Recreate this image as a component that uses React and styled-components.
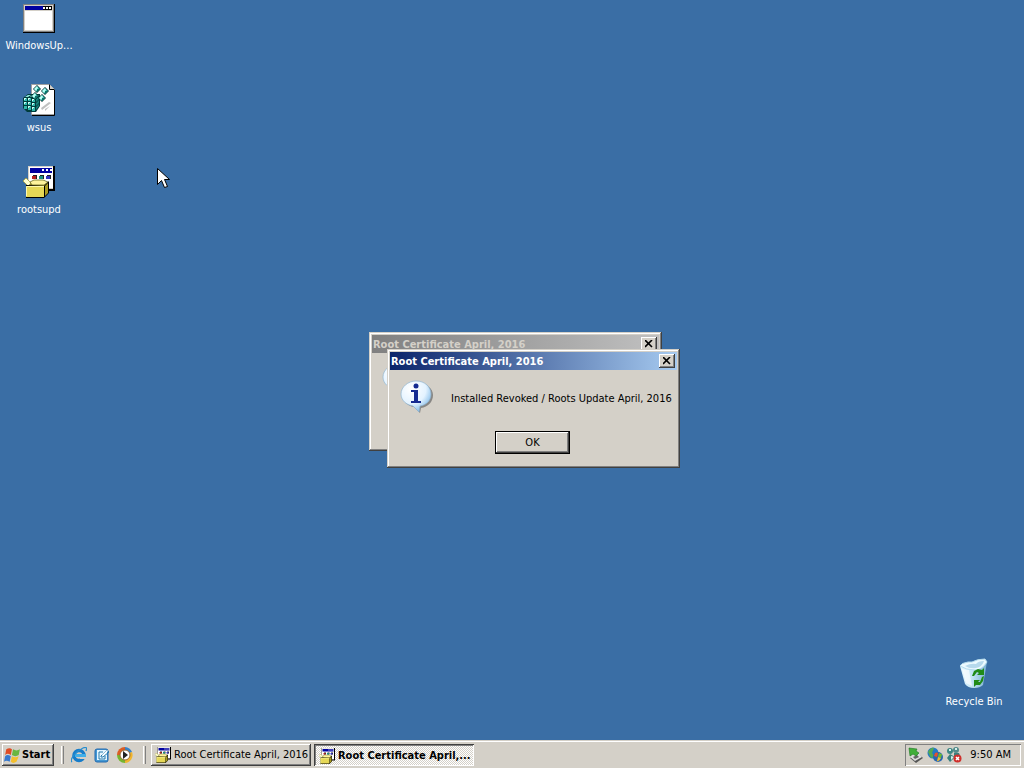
import React from "react";
import styled, { createGlobalStyle, css } from "styled-components";

const face = "#d4d0c8";
const uiFont = '"DejaVu Sans Condensed", "Noto Sans", "Liberation Sans", sans-serif';

const GlobalStyle = createGlobalStyle`
  * { box-sizing: border-box; }
  body { margin: 0; background: #3a6ea5; font: 11px/14px ${uiFont}; color: #000; cursor: default; }
  button { font: inherit; color: inherit; padding: 0; margin: 0; border: 0; border-radius: 0; }
  svg { display: block; flex: none; }
`;

const raised = css`
  background: ${face};
  box-shadow: inset -1px -1px #404040, inset 1px 1px #fff, inset -2px -2px #808080;
`;

const Screen = styled.div`
  display: flex;
  flex-direction: column;
  min-height: 100vh;
`;

const Desktop = styled.main`
  position: relative;
  flex: 1;
  display: flex;
  justify-content: space-between;
  overflow: hidden;
`;

const IconColumn = styled.div`
  display: flex;
  flex-direction: column;
  justify-content: ${(p) => (p.$bottom ? "flex-end" : "flex-start")};
  padding: ${(p) => (p.$bottom ? "0 11px 0 0" : "2px 0 0")};
`;

const Shortcut = styled.button`
  display: flex;
  flex-direction: column;
  align-items: center;
  gap: 5px;
  width: 78px;
  height: 82px;
  background: none;
  color: #fff;
`;

const Window = styled.section`
  position: absolute;
  left: ${(p) => p.$x}px;
  top: ${(p) => p.$y}px;
  width: 293px;
  height: 119px;
  padding: 3px;
  background: ${face};
  box-shadow: inset -1px -1px #404040, inset 1px 1px ${face}, inset -2px -2px #808080, inset 2px 2px #fff;
`;

const TitleBar = styled.header`
  display: flex;
  align-items: center;
  justify-content: space-between;
  height: 18px;
  padding: 0 2px 0 1px;
  color: ${(p) => (p.$active ? "#fff" : face)};
  background: ${(p) => (p.$active ? "linear-gradient(90deg, #0a246a, #a6caf0)" : "linear-gradient(90deg, #808080, #c0c0c0)")};
`;

const Title = styled.h1`
  margin: 0;
  padding-top: 2px;
  font-size: 11px;
  line-height: 14px;
  font-weight: bold;
  white-space: nowrap;
`;

const CloseButton = styled.button`
  display: flex;
  align-items: center;
  justify-content: center;
  width: 16px;
  height: 14px;
  ${raised}
`;

const Message = styled.div`
  display: flex;
  align-items: center;
  gap: 17px;
  padding: 10px 0 0 10px;
  white-space: nowrap;

  p { margin: 0; padding-top: 4px; }
`;

const Actions = styled.footer`
  display: flex;
  justify-content: center;
  padding: 17px 2px 0 0;
`;

const OkButton = styled.button`
  width: 75px;
  height: 23px;
  background: ${face};
  box-shadow: inset 0 0 0 1px #000, inset -2px -2px #404040, inset 2px 2px #fff, inset -3px -3px #808080;
`;

const Pointer = styled.div`
  position: absolute;
  left: 157px;
  top: 168px;
`;

const Taskbar = styled.nav`
  display: flex;
  align-items: center;
  height: 28px;
  padding: 4px 3px 2px 2px;
  background: ${face};
  box-shadow: inset 0 1px ${face}, inset 0 2px #fff;
`;

const StartButton = styled.button`
  display: flex;
  align-items: center;
  gap: 1px;
  width: 52px;
  height: 22px;
  padding-left: 2px;
  font-weight: bold;
  ${raised}
`;

const Grip = styled.span`
  width: 3px;
  height: 18px;
  margin: 0 5px 0 7px;
  background: ${face};
  border-left: 1px solid #fff;
  border-right: 1px solid #808080;
`;

const QuickLaunch = styled.div`
  display: flex;
  gap: 7px;
  padding: 0 3px 0 2px;
`;

const QuickButton = styled.button`
  background: none;
`;

const Tasks = styled.div`
  display: flex;
  flex: 1;
  gap: 3px;
`;

const Task = styled.button`
  display: flex;
  align-items: center;
  gap: 3px;
  width: 160px;
  height: 22px;
  padding-left: 4px;
  white-space: nowrap;
  ${raised}
  ${(p) =>
    p.$active &&
    css`
      padding: 1px 0 0 5px;
      font-weight: bold;
      background: repeating-conic-gradient(#fff 0 25%, ${face} 0 50%) 0 0 / 2px 2px;
      box-shadow: inset 1px 1px #404040, inset -1px -1px #fff, inset 2px 2px #808080;
    `}
`;

const Tray = styled.div`
  display: flex;
  align-items: center;
  gap: 3px;
  height: 22px;
  padding: 0 10px 0 3px;
  box-shadow: inset 1px 1px #808080, inset -1px -1px #fff;

  time { padding-left: 5px; }
`;

const AppWindowIcon = () => (
  <svg width="32" height="32" viewBox="0 0 32 32" shapeRendering="crispEdges" aria-hidden="true">
    <path fill="#000" d="M0 2h32v29H0z" />
    <path fill="#808080" d="M0 2h31v28H0z" />
    <path fill="#d4d0c8" d="M1 3h29v26H1z" />
    <path fill="#fff" d="M2 9h27v19H2z" />
    <path fill="#0000a0" d="M2 4h27v4H2z" />
    <path fill="#000" d="M20 4h9v4h-9z" />
    <path fill="#fff" d="M20 5h2v2h-2zM23 5h2v2h-2zM26 5h2v2h-2z" />
  </svg>
);

const Cube = ({ x, y }) => (
  <g transform={`translate(${x} ${y})`}>
    <path fill="#002c2c" d="m4 0 4 4-4 4-4-4z" />
    <path fill="#30b5a8" d="m4 1 3 3-3 3-3-3z" />
    <path fill="#b8fff5" d="m4 1 1 2-2 3-2-2z" />
    <path fill="#0d7068" d="M4 4h3L4 7z" />
  </g>
);

const RegistryIcon = () => (
  <svg width="32" height="32" viewBox="0 0 32 32" aria-hidden="true">
    <path fill="#fff" stroke="#a0a0a0" d="M8.500.5h18l5 5v25h-23z" />
    <path fill="#d4d0c8" stroke="#000" d="M26.500.5v5h5" />
    <path fill="none" stroke="#000" d="M31.500 6v25.500H9" />
    <path fill="#c0c0c0" d="m18 24 8-6 2 1-9 7zM22 25l5-3-5 5z" />
    <path fill="#003c3c" d="m0 14 5-4h12v12l-4 6H4l-4-4z" />
    <path fill="#8ce9dc" d="m2 13 3-2h3l-3 2zm5 0 2-2h3l-2 2zm5 0 2-2h2l-2 2z" />
    <path fill="#2fb6a9" d="M1 14h3v3H1zm4 0h3v3H5zm4 1h3v3H9zM1 18h3v3H1zm4 0h3v3H5zm4 1h3v3H9zM1 22h3v3H1zm4 0h3v4H5zm4 1h3v4H9z" />
    <path fill="#c9fff5" d="M1 14h2v1H2v1H1zm4 0h2v1H6v1H5zm4 1h2v1h-1v1H9zm-8 3h2v1H2v1H1zm4 0h2v1H6v1H5zm4 1h2v1h-1v1H9zm-4 3h2v1H6v1H5zm4 1h2v1h-1v1H9z" />
    <path fill="#138078" d="m13 15 3-3v3l-3 3zm0 4 3-3v3l-3 3zm0 4 3-3v2l-3 4z" />
    <Cube x={10} y={1} />
    <Cube x={18} y={3} />
    <Cube x={8} y={8} />
    <Cube x={15} y={10} />
  </svg>
);

const PackageIcon = ({ size = 32 }) => (
  <svg width={size} height={size} viewBox="0 0 32 32" aria-hidden="true">
    <path fill="#000" d="M5 0h27v25H5z" />
    <path fill="#d4d0c8" d="M5 0h25v23H5z" />
    <path fill="#fff" d="M6 1h24v21H6z" />
    <path fill="#0000a0" d="M7 2h22v5H7z" />
    <path fill="#fff" d="M19 3h2v2h-2zm4 0h2v2h-2zm4 0h2v2h-2z" />
    <path fill="#222" d="M10 9h4v4h-4zm7 0h4v4h-4zm7 0h4v4h-4z" />
    <path fill="#b82020" d="M9 10h4v3H9z" />
    <path fill="#169080" d="M16 10h4v3h-4z" />
    <path fill="#3333bd" d="M23 10h4v3h-4z" />
    <path fill="#8c8023" d="m4 20 4-4h17l-4 5z" />
    <path fill="#ffffcf" stroke="#a49b38" strokeWidth=".8" d="m0 15 3-3 5 5-3 3z" />
    <path fill="#fff39b" stroke="#6b6a22" strokeWidth=".8" d="m7 16 4-2h9l5 2-4 3H9z" />
    <path fill="#000" d="m3 19 18 1 5-5v12l-5 5H3z" />
    <path fill="#e6d856" d="M3 20h18v11H3z" />
    <path fill="#aa9b20" d="m22 20 3-3v10l-3 3z" />
    <path fill="none" stroke="#fff9ad" d="M3.500 30V20.500H21" />
  </svg>
);

const BinIcon = () => (
  <svg width="32" height="32" viewBox="0 0 32 32" aria-hidden="true">
    <defs>
      <linearGradient id="bin" x2="1">
        <stop stopColor="#e7f8ff" />
        <stop offset=".45" stopColor="#c3e5f5" />
        <stop offset="1" stopColor="#76add0" />
      </linearGradient>
    </defs>
    <path fill="url(#bin)" d="m2 8 5 18q3 4 9 4t9-3l4-23-9 6z" />
    <path fill="#edfaff" stroke="#b6dced" d="M2 8q1-3 8-4h4q5-3 13-3l2 3q-5 8-12 8Q8 12 2 8z" />
    <path fill="#b6d9ec" d="M7 8q6-3 11-2 2-3 8-3-2 6-8 7-6 1-11-2z" />
    <path fill="#fff" opacity=".65" d="m4 11 4 14 6 3-3-16z" />
    <g fill="#208b18">
      <path d="m14 18 2-5 4-2 4 1 2-2v7h-7l2-2-2-1-3 4z" />
      <path d="m26 18-1 5-3 4h-4l-2 2v-7h6l-2 2h2l2-5z" />
    </g>
  </svg>
);

const InfoIcon = () => (
  <svg width="34" height="34" viewBox="0 0 34 34" aria-hidden="true">
    <defs>
      <radialGradient id="bubble" cx=".35" cy=".25" r=".8">
        <stop stopColor="#fff" />
        <stop offset=".6" stopColor="#e4f3ff" />
        <stop offset="1" stopColor="#79b6e7" />
      </radialGradient>
    </defs>
    <path fill="#666" opacity=".7" d="M18 3c9 0 15 6 15 12 0 7-5 12-12 13l-1 5-6-6C7 26 3 21 3 15 3 8 9 3 18 3z" />
    <path fill="url(#bubble)" stroke="#91b4d0" strokeWidth=".7" d="M16 1c9 0 15 6 15 13 0 6-4 11-11 12l-1 6-6-6C6 25 1 20 1 14 1 7 8 1 16 1z" />
    <circle cx="16" cy="6" r="2.500" fill="#152b91" />
    <path fill="#152b91" d="M11 10h7v11h3v2H11v-2h3v-9h-3z" />
  </svg>
);

const CloseIcon = () => (
  <svg width="8" height="8" viewBox="0 0 8 8" aria-hidden="true">
    <path fill="none" stroke="#000" strokeWidth="1.600" d="m0 0 7 7M7 0 0 7" />
  </svg>
);

const FlagIcon = () => (
  <svg width="17" height="16" viewBox="1 1 15 14" aria-hidden="true">
    <path fill="#df4c24" d="M3 3q3-2 5 0L7 8Q4 6 2 8z" />
    <path fill="#69b641" d="M9 3q3 2 6 0l-1 5q-3 2-6 0z" />
    <path fill="#3679ce" d="M2 9q2-2 5 0l-1 5q-3-2-5 0z" />
    <path fill="#f4bf2d" d="M8 9q3 2 6 0l-2 5q-3 2-5 0z" />
  </svg>
);

const IEIcon = () => (
  <svg width="16" height="16" viewBox="0 0 16 16" aria-hidden="true">
    <circle cx="8" cy="8.500" r="5" fill="none" stroke="#177dca" strokeWidth="3.500" />
    <path fill="#d4d0c8" d="M9 10h7v2H9z" />
    <path fill="#42afe8" d="M4 7h11v3H4z" />
    <path fill="none" stroke="#278dce" strokeWidth="1.300" d="M1 15C-2 13 5 4 12 1q5-2 3 3" />
  </svg>
);

const ShowDesktopIcon = () => (
  <svg width="16" height="16" viewBox="0 0 16 16" aria-hidden="true">
    <rect x="1" y="2" width="13" height="13" rx="2" fill="#4599d4" stroke="#2269ae" />
    <path fill="#e5f6ff" d="M3 3h10v10H3z" />
    <path fill="none" stroke="#267aac" d="M9 5H5v7h6V9M7 9l6-6 2 2-6 5H7z" />
    <path fill="#fff" d="m8 8 5-5 1 1-5 5z" />
  </svg>
);

const MediaIcon = () => (
  <svg width="16" height="16" viewBox="0 0 16 16" aria-hidden="true">
    <path fill="#dc5d24" d="M8 0a8 8 0 0 0-8 8h8z" />
    <path fill="#76b62f" d="M0 8a8 8 0 0 0 8 8V8z" />
    <path fill="#3683cb" d="M8 0a8 8 0 0 1 7 5L8 8z" />
    <path fill="#f0b52e" d="M15 5a8 8 0 0 1-7 11V8z" />
    <circle cx="8" cy="8" r="5" fill="#fff" stroke="#976a32" />
    <path fill="#222" d="m6 4 5 4-5 4z" />
  </svg>
);

const HardwareIcon = () => (
  <svg width="16" height="16" viewBox="0 0 16 16" aria-hidden="true">
    <path fill="#555" d="m2 11 8-5 5 5-7 5z" />
    <path fill="#ddd" d="m2 10 8-5 4 5-7 4z" />
    <path fill="#666" d="m5 10 4-2 2 2-4 2z" />
    <path fill="#41ae39" stroke="#187620" strokeWidth=".6" d="m1 1 8 1-1 2 3 2-3 3-3-2-3 2z" />
  </svg>
);

const UpdateIcon = () => (
  <svg width="16" height="16" viewBox="0 0 16 16" aria-hidden="true">
    <circle cx="6" cy="6" r="5.500" fill="#2479c4" />
    <path fill="#53a951" d="M1 5q3-5 6-4L5 6l3 4-4 1z" />
    <circle cx="11" cy="10" r="5" fill="#2967b1" />
    <path fill="#e5532c" d="M8 6q2-1 3 0l-1 4-3-1z" />
    <path fill="#6aba35" d="M12 6q2 1 3 1l-1 4-3-1z" />
    <path fill="#f1bb2b" d="m11 10 3 1q-2 4-4 3z" />
  </svg>
);

const MessengerIcon = () => (
  <svg width="16" height="16" viewBox="0 0 16 16" aria-hidden="true">
    <circle cx="4" cy="4" r="3" fill="#3d8784" />
    <circle cx="10" cy="3" r="3" fill="#528b8b" />
    <path fill="#397f7d" d="m4 7 5 3-5 5-3-4zM8 6h5l2 5-7-2z" />
    <path fill="#d5efea" d="M3 2h2v2H3zm6-1h2v2H9zM5 9l3 1-3 3z" />
    <circle cx="11.500" cy="11.500" r="4" fill="#cf302c" />
    <path stroke="#fff" strokeWidth="1.500" d="m10 10 3 3m0-3-3 3" />
  </svg>
);

const CursorIcon = () => (
  <svg width="13" height="21" viewBox="0 0 13 21" aria-hidden="true">
    <path fill="#fff" stroke="#000" d="M.5.5v16l4-4 3 7 3-1-3-7h5z" />
  </svg>
);

const DialogTitle = ({ active }) => (
  <TitleBar $active={active}>
    <Title>Root Certificate April, 2016</Title>
    <CloseButton aria-label="Close"><CloseIcon /></CloseButton>
  </TitleBar>
);

export default function App() {
  return (
    <Screen>
      <GlobalStyle />
      <Desktop>
        <IconColumn>
          <Shortcut><AppWindowIcon />WindowsUp...</Shortcut>
          <Shortcut><RegistryIcon />wsus</Shortcut>
          <Shortcut><PackageIcon />rootsupd</Shortcut>
        </IconColumn>
        <IconColumn $bottom>
          <Shortcut><BinIcon />Recycle Bin</Shortcut>
        </IconColumn>
        <Window $x={369} $y={332}>
          <DialogTitle />
          <Message><InfoIcon /></Message>
        </Window>
        <Window $x={387} $y={349} role="dialog">
          <DialogTitle active />
          <Message>
            <InfoIcon />
            <p>Installed Revoked / Roots Update April, 2016</p>
          </Message>
          <Actions><OkButton>OK</OkButton></Actions>
        </Window>
        <Pointer><CursorIcon /></Pointer>
      </Desktop>
      <Taskbar>
        <StartButton><FlagIcon />Start</StartButton>
        <Grip />
        <QuickLaunch>
          <QuickButton aria-label="Internet Explorer"><IEIcon /></QuickButton>
          <QuickButton aria-label="Show Desktop"><ShowDesktopIcon /></QuickButton>
          <QuickButton aria-label="Media Player"><MediaIcon /></QuickButton>
        </QuickLaunch>
        <Grip />
        <Tasks>
          <Task><PackageIcon size={16} />Root Certificate April, 2016</Task>
          <Task $active><PackageIcon size={16} />Root Certificate April,...</Task>
        </Tasks>
        <Tray>
          <HardwareIcon />
          <UpdateIcon />
          <MessengerIcon />
          <time>9:50 AM</time>
        </Tray>
      </Taskbar>
    </Screen>
  );
}
